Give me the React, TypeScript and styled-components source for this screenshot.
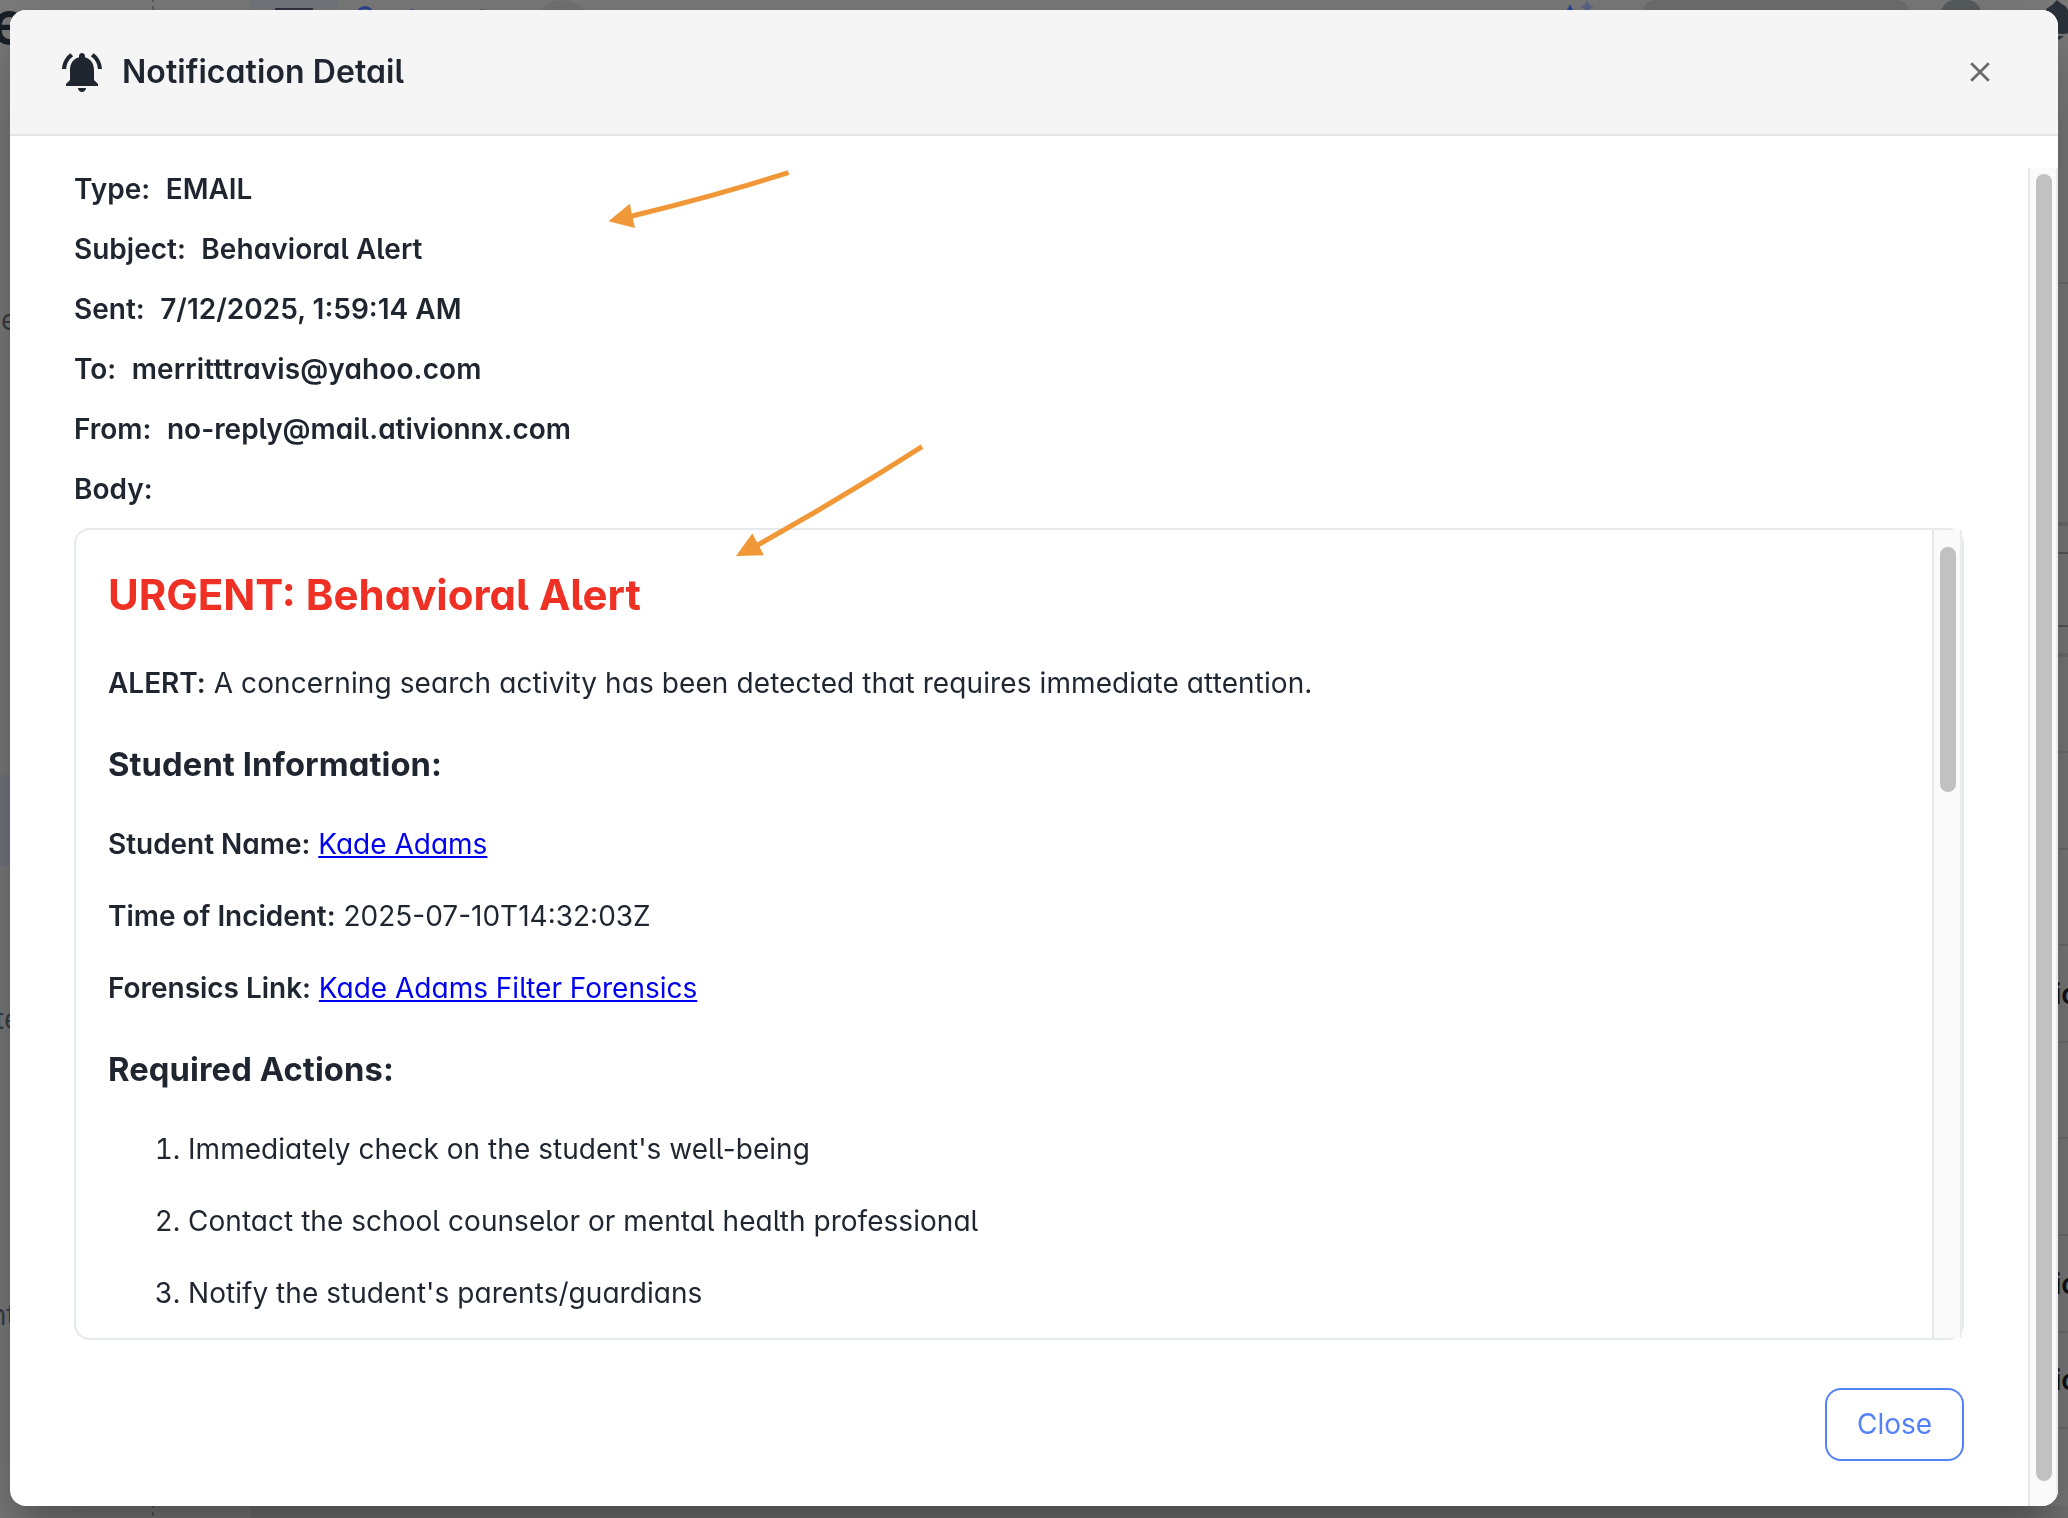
import styled, { createGlobalStyle } from "styled-components";
import { MdNotificationsActive } from "react-icons/md";

const colors = {
  text: "#1f2630",
  danger: "#ee3124",
  primary: "#5581f7",
  link: "#0000ee",
  border: "#e5eaee",
  headerBorder: "#e4e5ea",
  arrow: "#f09837",
  dimText: "#3a3f46",
};

const GlobalStyle = createGlobalStyle`
  * {
    box-sizing: border-box;
  }
  body {
    margin: 0;
    overflow: hidden;
    font-family: Inter, "Liberation Sans", sans-serif;
    font-feature-settings: "cv05", "cv11";
    color: ${colors.text};
  }
`;

/* page behind the modal */

const Page = styled.div`
  display: flex;
  flex-direction: column;
  width: 2068px;
  height: 1518px;
  overflow: hidden;
  background: #7c7c7c;
`;

const TopBar = styled.div`
  display: flex;
  align-items: flex-start;
  flex-shrink: 0;
  height: 60px;
`;

const PageTitle = styled.div`
  display: flex;
  justify-content: flex-end;
  flex-shrink: 0;
  width: 27px;
  margin-right: 125px;
  font-size: 60px;
  font-weight: 600;
  line-height: 44px;
  color: #182028;
`;

const Dashes = styled.div<{ $height: number }>`
  flex-shrink: 0;
  width: 2px;
  height: ${(p) => p.$height}px;
  background: repeating-linear-gradient(#5a5c60 0 2px, transparent 2px 6px, #5a5c60 6px 8px);
`;

const ActiveTab = styled.div`
  flex-shrink: 0;
  width: 88px;
  height: 60px;
  margin-left: 96px;
  padding: 8px 25px;
  background: #75797d;
`;

const MenuBar = styled.div`
  width: 38px;
  height: 4px;
  background: #2f313d;
`;

const TopIcon = styled.svg<{ $left: number }>`
  flex-shrink: 0;
  margin-left: ${(p) => p.$left}px;
`;

const Chip = styled.div<{ $left: number; $width: number; $radius: number; $color: string }>`
  flex-shrink: 0;
  width: ${(p) => p.$width}px;
  height: 60px;
  margin-left: ${(p) => p.$left}px;
  border-radius: ${(p) => p.$radius}px;
  background: ${(p) => p.$color};
`;

const PageBody = styled.div`
  display: flex;
  justify-content: space-between;
  flex: 1;
  min-height: 0;
`;

const LeftEdge = styled.div`
  display: flex;
  flex-direction: column;
  width: 40px;
`;

const LeftText = styled.div<{ $height: number; $shift: number }>`
  display: flex;
  align-items: flex-end;
  flex-shrink: 0;
  height: ${(p) => p.$height}px;
  margin-left: ${(p) => p.$shift}px;
  font-size: 28px;
  line-height: 28px;
  color: ${colors.dimText};
`;

const LeftHighlight = styled.div`
  flex-shrink: 0;
  height: 91px;
  margin-top: 441px;
  background: #75767f;
`;

const RightEdge = styled.div`
  display: flex;
  flex-direction: column;
  width: 14px;
  overflow: hidden;
`;

const RightCell = styled.div<{ $height: number; $line?: string; $weight?: number }>`
  display: flex;
  align-items: center;
  flex-shrink: 0;
  height: ${(p) => p.$height}px;
  border-bottom: ${(p) => p.$weight ?? 2}px solid ${(p) => p.$line ?? "#6f6f6f"};
  font-size: 28px;
  font-weight: 600;
  color: #101216;
`;

const PageFooter = styled.div`
  display: flex;
  flex-shrink: 0;
  height: 12px;
`;

const FooterSpace = styled.div<{ $width?: number; $color?: string }>`
  flex: ${(p) => (p.$width ? "none" : 1)};
  width: ${(p) => p.$width}px;
  background: ${(p) => p.$color};
`;

/* modal */

const Overlay = styled.div`
  position: fixed;
  top: 0;
  left: 0;
  display: flex;
  width: 2068px;
  height: 1518px;
  padding: 10px 10px 12px;
`;

const Modal = styled.div`
  display: flex;
  flex-direction: column;
  flex: 1;
  overflow: hidden;
  border-radius: 16px;
  background: #fff;
  box-shadow: 0 22px 30px -14px rgba(0, 0, 0, 0.2), 0 48px 76px 6px rgba(0, 0, 0, 0.14),
    0 18px 92px 16px rgba(0, 0, 0, 0.12);
`;

const ModalHeader = styled.div`
  display: flex;
  align-items: center;
  flex-shrink: 0;
  height: 126px;
  padding: 0 68px 0 48px;
  border-bottom: 2px solid ${colors.headerBorder};
  background: #f5f5f5;
`;

const ModalTitle = styled.h2`
  flex: 1;
  margin: 0 0 0 16px;
  font-size: 32px;
  font-weight: 600;
  line-height: 40px;
  letter-spacing: 0.07px;
`;

const CloseIcon = styled.svg`
  width: 20px;
  height: 20px;
`;

const ModalBody = styled.div`
  display: flex;
  flex: 1;
  min-height: 0;
  padding-top: 32px;
`;

const ModalContent = styled.div`
  display: flex;
  flex-direction: column;
  flex: 1;
  padding: 0 64px;
`;

const Field = styled.div`
  display: flex;
  gap: 15.5px;
  height: 60px;
  font-size: 28px;
  font-weight: 600;
  line-height: 42px;
`;

const FieldValue = styled.span<{ $spacing?: number }>`
  letter-spacing: ${(p) => p.$spacing ?? 0}px;
`;

const MessageBox = styled.div`
  display: flex;
  height: 812px;
  border: 2px solid ${colors.border};
  border-radius: 16px;
`;

const Message = styled.div`
  flex: 1;
  padding: 0 32px;
  overflow: hidden;
  font-size: 28px;
  line-height: 42px;
`;

const UrgentTitle = styled.h1`
  margin: 35px 0 37px;
  font-size: 42px;
  font-weight: 700;
  line-height: 60px;
  color: ${colors.danger};
`;

const SectionTitle = styled.h3`
  margin: 38px 0 37px;
  font-size: 32.76px;
  font-weight: 700;
  line-height: 44px;
  letter-spacing: 0.08px;
`;

const Paragraph = styled.p<{ $spacing?: number }>`
  margin: 0 0 30px;
  letter-spacing: ${(p) => p.$spacing ?? 0}px;

  strong {
    font-weight: 600;
    letter-spacing: -0.03px;
  }
`;

const Link = styled.a`
  color: ${colors.link};
  text-decoration: underline;
`;

const ActionList = styled.ol`
  margin: 0;
  padding-left: 80px;
  letter-spacing: 0.04px;
`;

const ActionItem = styled.li`
  margin-bottom: 30px;
`;

const ScrollTrack = styled.div<{ $top: number }>`
  flex-shrink: 0;
  width: 30px;
  padding: ${(p) => p.$top}px 4px 0 6px;
  border-left: 2px solid #e7e7e7;
  border-right: 2px solid #ececec;
  background: #fafafa;
`;

const ScrollThumb = styled.div<{ $height: number }>`
  width: 16px;
  height: ${(p) => p.$height}px;
  border-radius: 8px;
  background: #c1c1c1;
`;

const Actions = styled.div`
  display: flex;
  justify-content: flex-end;
  padding-top: 48px;
`;

const CloseButton = styled.button`
  width: 139px;
  height: 73px;
  padding: 0 0 2px;
  border: 2px solid ${colors.primary};
  border-radius: 16px;
  background: #fff;
  color: ${colors.primary};
  font-family: Inter, "Liberation Sans", sans-serif;
  font-feature-settings: normal;
  font-size: 28px;
`;

const Annotations = styled.svg`
  position: absolute;
  top: 0;
  left: 0;
  pointer-events: none;
`;

const fields = [
  { label: "Type:", value: "EMAIL" },
  { label: "Subject:", value: "Behavioral Alert", spacing: 0.07 },
  { label: "Sent:", value: "7/12/2025, 1:59:14 AM" },
  { label: "To:", value: "merritttravis@yahoo.com", spacing: 0.12 },
  { label: "From:", value: "no-reply@mail.ativionnx.com", spacing: -0.03 },
  { label: "Body:", value: "" },
];

const actions = [
  "Immediately check on the student's well-being",
  "Contact the school counselor or mental health professional",
  "Notify the student's parents/guardians",
];

const cells = [
  { height: 224 },
  { height: 242, weight: 4 },
  { height: 28, line: "#565b60" },
  { height: 73, line: "#565b60" },
  { height: 30, weight: 4 },
  { height: 96 },
  { height: 97 },
  { height: 96 },
  { height: 97, text: "ic" },
  { height: 96 },
  { height: 97 },
  { height: 97, text: "ic" },
  { height: 96, text: "ic" },
];

const Background = () => (
  <Page>
    <TopBar>
      <PageTitle>e</PageTitle>
      <Dashes $height={60} />
      <ActiveTab>
        <MenuBar />
      </ActiveTab>
      <TopIcon $left={18} width="18" height="24">
        <circle cx="9" cy="15" r="7.5" fill="none" stroke="#2a458f" strokeWidth="3" />
      </TopIcon>
      <TopIcon $left={34} width="8" height="16">
        <circle cx="4" cy="12" r="3" fill="#3f4f86" />
      </TopIcon>
      <TopIcon $left={62} width="8" height="16">
        <circle cx="4" cy="12" r="3" fill="#555b6c" />
      </TopIcon>
      <Chip $left={48} $width={56} $radius={28} $color="#747474" />
      <TopIcon $left={973} width="34" height="16">
        <path d="M7 4Q8 8 12 12H2Q6 8 7 4Z" fill="#27449c" />
        <path d="M24 -1Q25 6 31 7Q25 8 24 14Q23 8 17 7Q23 6 24 -1Z" fill="#5a6585" />
      </TopIcon>
      <Chip $left={46} $width={266} $radius={12} $color="#707070" />
      <Chip $left={32} $width={40} $radius={14} $color="#575d60" />
      <TopIcon $left={64} width="24" height="44">
        <path d="M12 0Q15 3 20 6Q24 9 24 16V33Q18 35 12 33L1 29V9Q8 5 12 0Z" fill="#2c333b" />
        <path d="M12 36H19L14 40Z" fill="#2c333b" />
      </TopIcon>
    </TopBar>
    <PageBody>
      <LeftEdge>
        <LeftText $height={274} $shift={1}>
          e
        </LeftText>
        <LeftHighlight />
        <LeftText $height={167} $shift={-5}>
          te
        </LeftText>
        <LeftText $height={296} $shift={-10}>
          nt
        </LeftText>
      </LeftEdge>
      <RightEdge>
        {cells.map((cell, index) => (
          <RightCell key={index} $height={cell.height} $line={cell.line} $weight={cell.weight}>
            {cell.text}
          </RightCell>
        ))}
      </RightEdge>
    </PageBody>
    <PageFooter>
      <FooterSpace $width={152} />
      <Dashes $height={12} />
      <FooterSpace $width={97} />
      <FooterSpace $color="#747474" />
    </PageFooter>
  </Page>
);

const App = () => {
  return (
    <>
      <GlobalStyle />
      <Background />
      <Overlay>
        <Modal>
          <ModalHeader>
            <MdNotificationsActive size={48} />
            <ModalTitle>Notification Detail</ModalTitle>
            <CloseIcon viewBox="0 0 20 20">
              <path d="M1.2 1.2L18.8 18.8M18.8 1.2L1.2 18.8" stroke="#6b6b6b" strokeWidth="2.8" />
            </CloseIcon>
          </ModalHeader>
          <ModalBody>
            <ModalContent>
              {fields.map((field) => (
                <Field key={field.label}>
                  <span>{field.label}</span>
                  <FieldValue $spacing={field.spacing}>{field.value}</FieldValue>
                </Field>
              ))}
              <MessageBox>
                <Message>
                  <UrgentTitle>URGENT: Behavioral Alert</UrgentTitle>
                  <Paragraph $spacing={0.1}>
                    <strong>ALERT:</strong> A concerning search activity has been detected that requires immediate
                    attention.
                  </Paragraph>
                  <SectionTitle>Student Information:</SectionTitle>
                  <Paragraph>
                    <strong>Student Name:</strong> <Link>Kade Adams</Link>
                  </Paragraph>
                  <Paragraph>
                    <strong>Time of Incident:</strong> 2025-07-10T14:32:03Z
                  </Paragraph>
                  <Paragraph>
                    <strong>Forensics Link:</strong> <Link>Kade Adams Filter Forensics</Link>
                  </Paragraph>
                  <SectionTitle>Required Actions:</SectionTitle>
                  <ActionList>
                    {actions.map((action) => (
                      <ActionItem key={action}>{action}</ActionItem>
                    ))}
                  </ActionList>
                </Message>
                <ScrollTrack $top={17}>
                  <ScrollThumb $height={245} />
                </ScrollTrack>
              </MessageBox>
              <Actions>
                <CloseButton>Close</CloseButton>
              </Actions>
            </ModalContent>
            <ScrollTrack $top={6}>
              <ScrollThumb $height={1307} />
            </ScrollTrack>
          </ModalBody>
        </Modal>
        <Annotations width="2068" height="1518" fill="none">
          <path d="M788.5 172.7Q712 197 630 216.5" stroke={colors.arrow} strokeWidth="5" />
          <path d="M608.5 221.3L629.7 203.7L635 228Z" fill={colors.arrow} />
          <path d="M922 446.7Q840 499 757 545.5" stroke={colors.arrow} strokeWidth="5" />
          <path d="M736 556L752.3 533.5L764 555.3Z" fill={colors.arrow} />
        </Annotations>
      </Overlay>
    </>
  );
};

export default App;
